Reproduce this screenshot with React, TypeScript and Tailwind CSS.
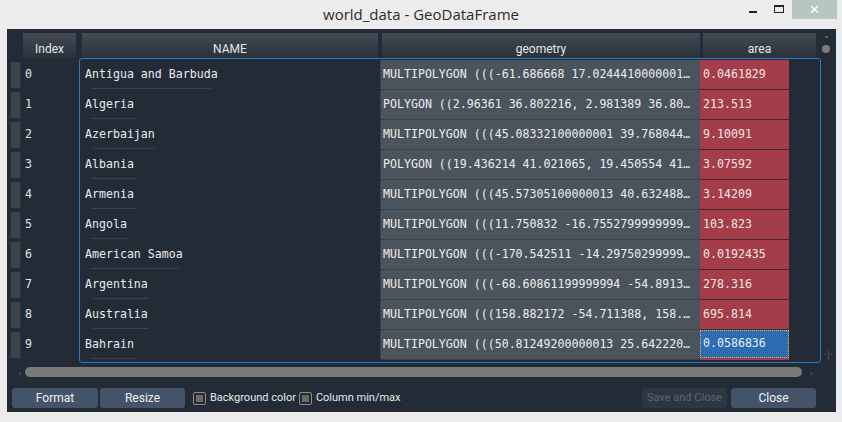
import React from 'react';

const rows = [
  { name: 'Antigua and Barbuda', geom: 'MULTIPOLYGON (((-61.686668 17.0244410000001…', area: '0.0461829' },
  { name: 'Algeria', geom: 'POLYGON ((2.96361 36.802216, 2.981389 36.80…', area: '213.513' },
  { name: 'Azerbaijan', geom: 'MULTIPOLYGON (((45.08332100000001 39.768044…', area: '9.10091' },
  { name: 'Albania', geom: 'POLYGON ((19.436214 41.021065, 19.450554 41…', area: '3.07592' },
  { name: 'Armenia', geom: 'MULTIPOLYGON (((45.57305100000013 40.632488…', area: '3.14209' },
  { name: 'Angola', geom: 'MULTIPOLYGON (((11.750832 -16.7552799999999…', area: '103.823' },
  { name: 'American Samoa', geom: 'MULTIPOLYGON (((-170.542511 -14.29750299999…', area: '0.0192435' },
  { name: 'Argentina', geom: 'MULTIPOLYGON (((-68.60861199999994 -54.8913…', area: '278.316' },
  { name: 'Australia', geom: 'MULTIPOLYGON (((158.882172 -54.711388, 158.…', area: '695.814' },
  { name: 'Bahrain', geom: 'MULTIPOLYGON (((50.81249200000013 25.642220…', area: '0.0586836' },
];

const mono = "font-['DejaVu_Sans_Mono',monospace] text-[11.6px]";
const ui = "font-['Roboto','Noto_Sans',sans-serif]";

// header cell with the dithered look approximated by a gradient
const HeaderCell: React.FC<{ w: string; label: string }> = ({ w, label }) => (
  <div className={`${w} h-[25px] flex items-end justify-center bg-linear-to-b from-[#454c55] via-[#363d47] to-[#2a323c] text-[12px] text-[#e4e6e8] ${ui} leading-none`}>
    <span className="pb-[3px]">{label}</span>
  </div>
);

const Checkbox: React.FC<{ label: string }> = ({ label }) => (
  <label className="flex items-center gap-[4px]">
    <span className="w-[13px] h-[13px] rounded-[2px] border border-[#8c8c8c] flex items-center justify-center">
      <span className="w-[7px] h-[7px] bg-[#6f6964]" />
    </span>
    <span className={`${ui} text-[11px] text-[#e6eaee]`}>{label}</span>
  </label>
);

export default function App() {
  return (
    <div className="w-[842px] h-[422px] bg-[#ececec] flex flex-col overflow-hidden">
      {/* title bar */}
      <div className="h-[29px] grid grid-cols-[1fr_auto_1fr] items-start">
        <div />
        <div className="font-['Open_Sans',sans-serif] text-[15px] text-[#2b2b2b] pt-[3px]">world_data - GeoDataFrame</div>
        <div className="flex justify-end items-start pr-[5px]">
          <div className="w-[26px] h-[20px] flex items-center justify-center">
            <span className="w-[8px] h-[2px] bg-[#222] mt-[3px]" />
          </div>
          <div className="w-[26px] h-[20px] flex items-center justify-center">
            <span className="w-[10px] h-[8px] border border-[#222] border-t-2 -mt-[2px]" />
          </div>
          <div className="w-[45px] h-[19px] bg-[#b7c6c1] flex items-center justify-center text-white text-[13px] font-['DejaVu_Sans',sans-serif]">
            ✕
          </div>
        </div>
      </div>

      {/* window body */}
      <div className="ml-[7px] w-[829px] h-[383px] bg-[#232b36] flex flex-col">
        {/* column headers */}
        <div className="flex mt-[4px] h-[25px]">
          <div className="w-[16px]" />
          <HeaderCell w="w-[53px]" label="Index" />
          <div className="w-[6px]" />
          <HeaderCell w="w-[296px]" label="NAME" />
          <div className="w-[4px]" />
          <HeaderCell w="w-[318px]" label="geometry" />
          <div className="w-[3px]" />
          <HeaderCell w="w-[113px]" label="area" />
          <div className="flex-1 flex flex-col items-center">
            <span className="mt-[3px] w-[3px] h-[2px] bg-[#5a5f66]" />
            <span className="mt-[7px] w-[8px] h-[8px] rounded-full bg-[#847a73]" />
          </div>
        </div>

        {/* table area */}
        <div className="flex h-[305px]">
          {/* row stubs + index */}
          <div className="w-[72px] flex flex-col pt-[2px]">
            {rows.map((_, i) => (
              <div key={i} className="h-[30px] flex items-center">
                <span className="ml-[3px] w-[11px] h-[26px] bg-[#3c434c] border-x border-[#2c333c]" />
                <span className={`${mono} ml-[4px] text-[#e3e5e7]`}>{i}</span>
              </div>
            ))}
          </div>

          {/* bordered table */}
          <div className="w-[742px] h-[305px] border border-[#2c7cc2] rounded-[3px] pt-[1px]">
            {rows.map((r, i) => (
              <div key={i} className="h-[30px] flex">
                <div className="w-[300px] relative flex items-center px-[5px]">
                  <span className={`${mono} text-[#e9ebed]`}>{r.name}</span>
                  <span
                    className="absolute left-[12px] bottom-[1px] border-b border-dotted border-[#4a535e]"
                    style={{ width: `${Math.max(r.name.length * 6.3, 30)}px` }}
                  />
                </div>
                <div className="w-[320px] bg-[#4b535c] border-l border-dotted border-[#2b3139] border-b flex items-center px-[2px]">
                  <span className={`${mono} text-[#eceef0] whitespace-nowrap overflow-hidden`}>{r.geom}</span>
                </div>
                {i === 9 ? (
                  <div className="w-[89px] flex flex-col">
                    <div className="flex-1 bg-[#2c6db2] border border-dotted border-[#e0b860] flex items-center px-[2px]">
                      <span className={`${mono} text-[#e6ecf2]`}>{r.area}</span>
                    </div>
                    <div className="h-[2px] bg-[#a43c4a]" />
                  </div>
                ) : (
                  <div className="w-[89px] bg-[#a43c4a] border-b border-[#3e2a31] flex items-center px-[3px]">
                    <span className={`${mono} text-[#f1e8e8]`}>{r.area}</span>
                  </div>
                )}
              </div>
            ))}
          </div>

          <div className="flex-1 flex flex-col items-center justify-end pb-[4px]">
            <span className="text-[8px] leading-none text-[#6a7078]">·|·</span>
          </div>
        </div>

        {/* horizontal scrollbar */}
        <div className="flex items-center h-[12px] mt-[3px]">
          <span className="w-[18px] text-right pr-[4px] text-[9px] leading-none text-[#5f656c]">‹</span>
          <div className="w-[777px] h-[10px] rounded-full bg-[#7b7a7b]" />
          <span className="ml-[8px] text-[9px] leading-none text-[#5f656c]">›</span>
        </div>

        {/* bottom controls */}
        <div className="flex items-center mt-[10px] h-[20px] pl-[5px] pr-[20px]">
          <button className={`w-[86px] h-[20px] rounded-[3px] bg-[#435368] text-[#eef1f4] text-[12px] ${ui}`}>Format</button>
          <button className={`ml-[2px] w-[85px] h-[20px] rounded-[3px] bg-[#435368] text-[#eef1f4] text-[12px] ${ui}`}>Resize</button>
          <div className="ml-[8px]">
            <Checkbox label="Background color" />
          </div>
          <div className="ml-[3px]">
            <Checkbox label="Column min/max" />
          </div>
          <div className="flex-1" />
          <button className={`w-[85px] h-[20px] rounded-[3px] bg-[#2d3743] text-[#5d646d] text-[11px] ${ui}`}>Save and Close</button>
          <button className={`ml-[4px] w-[85px] h-[20px] rounded-[3px] bg-[#435368] text-[#eef1f4] text-[12px] ${ui}`}>Close</button>
        </div>
      </div>
    </div>
  );
}
